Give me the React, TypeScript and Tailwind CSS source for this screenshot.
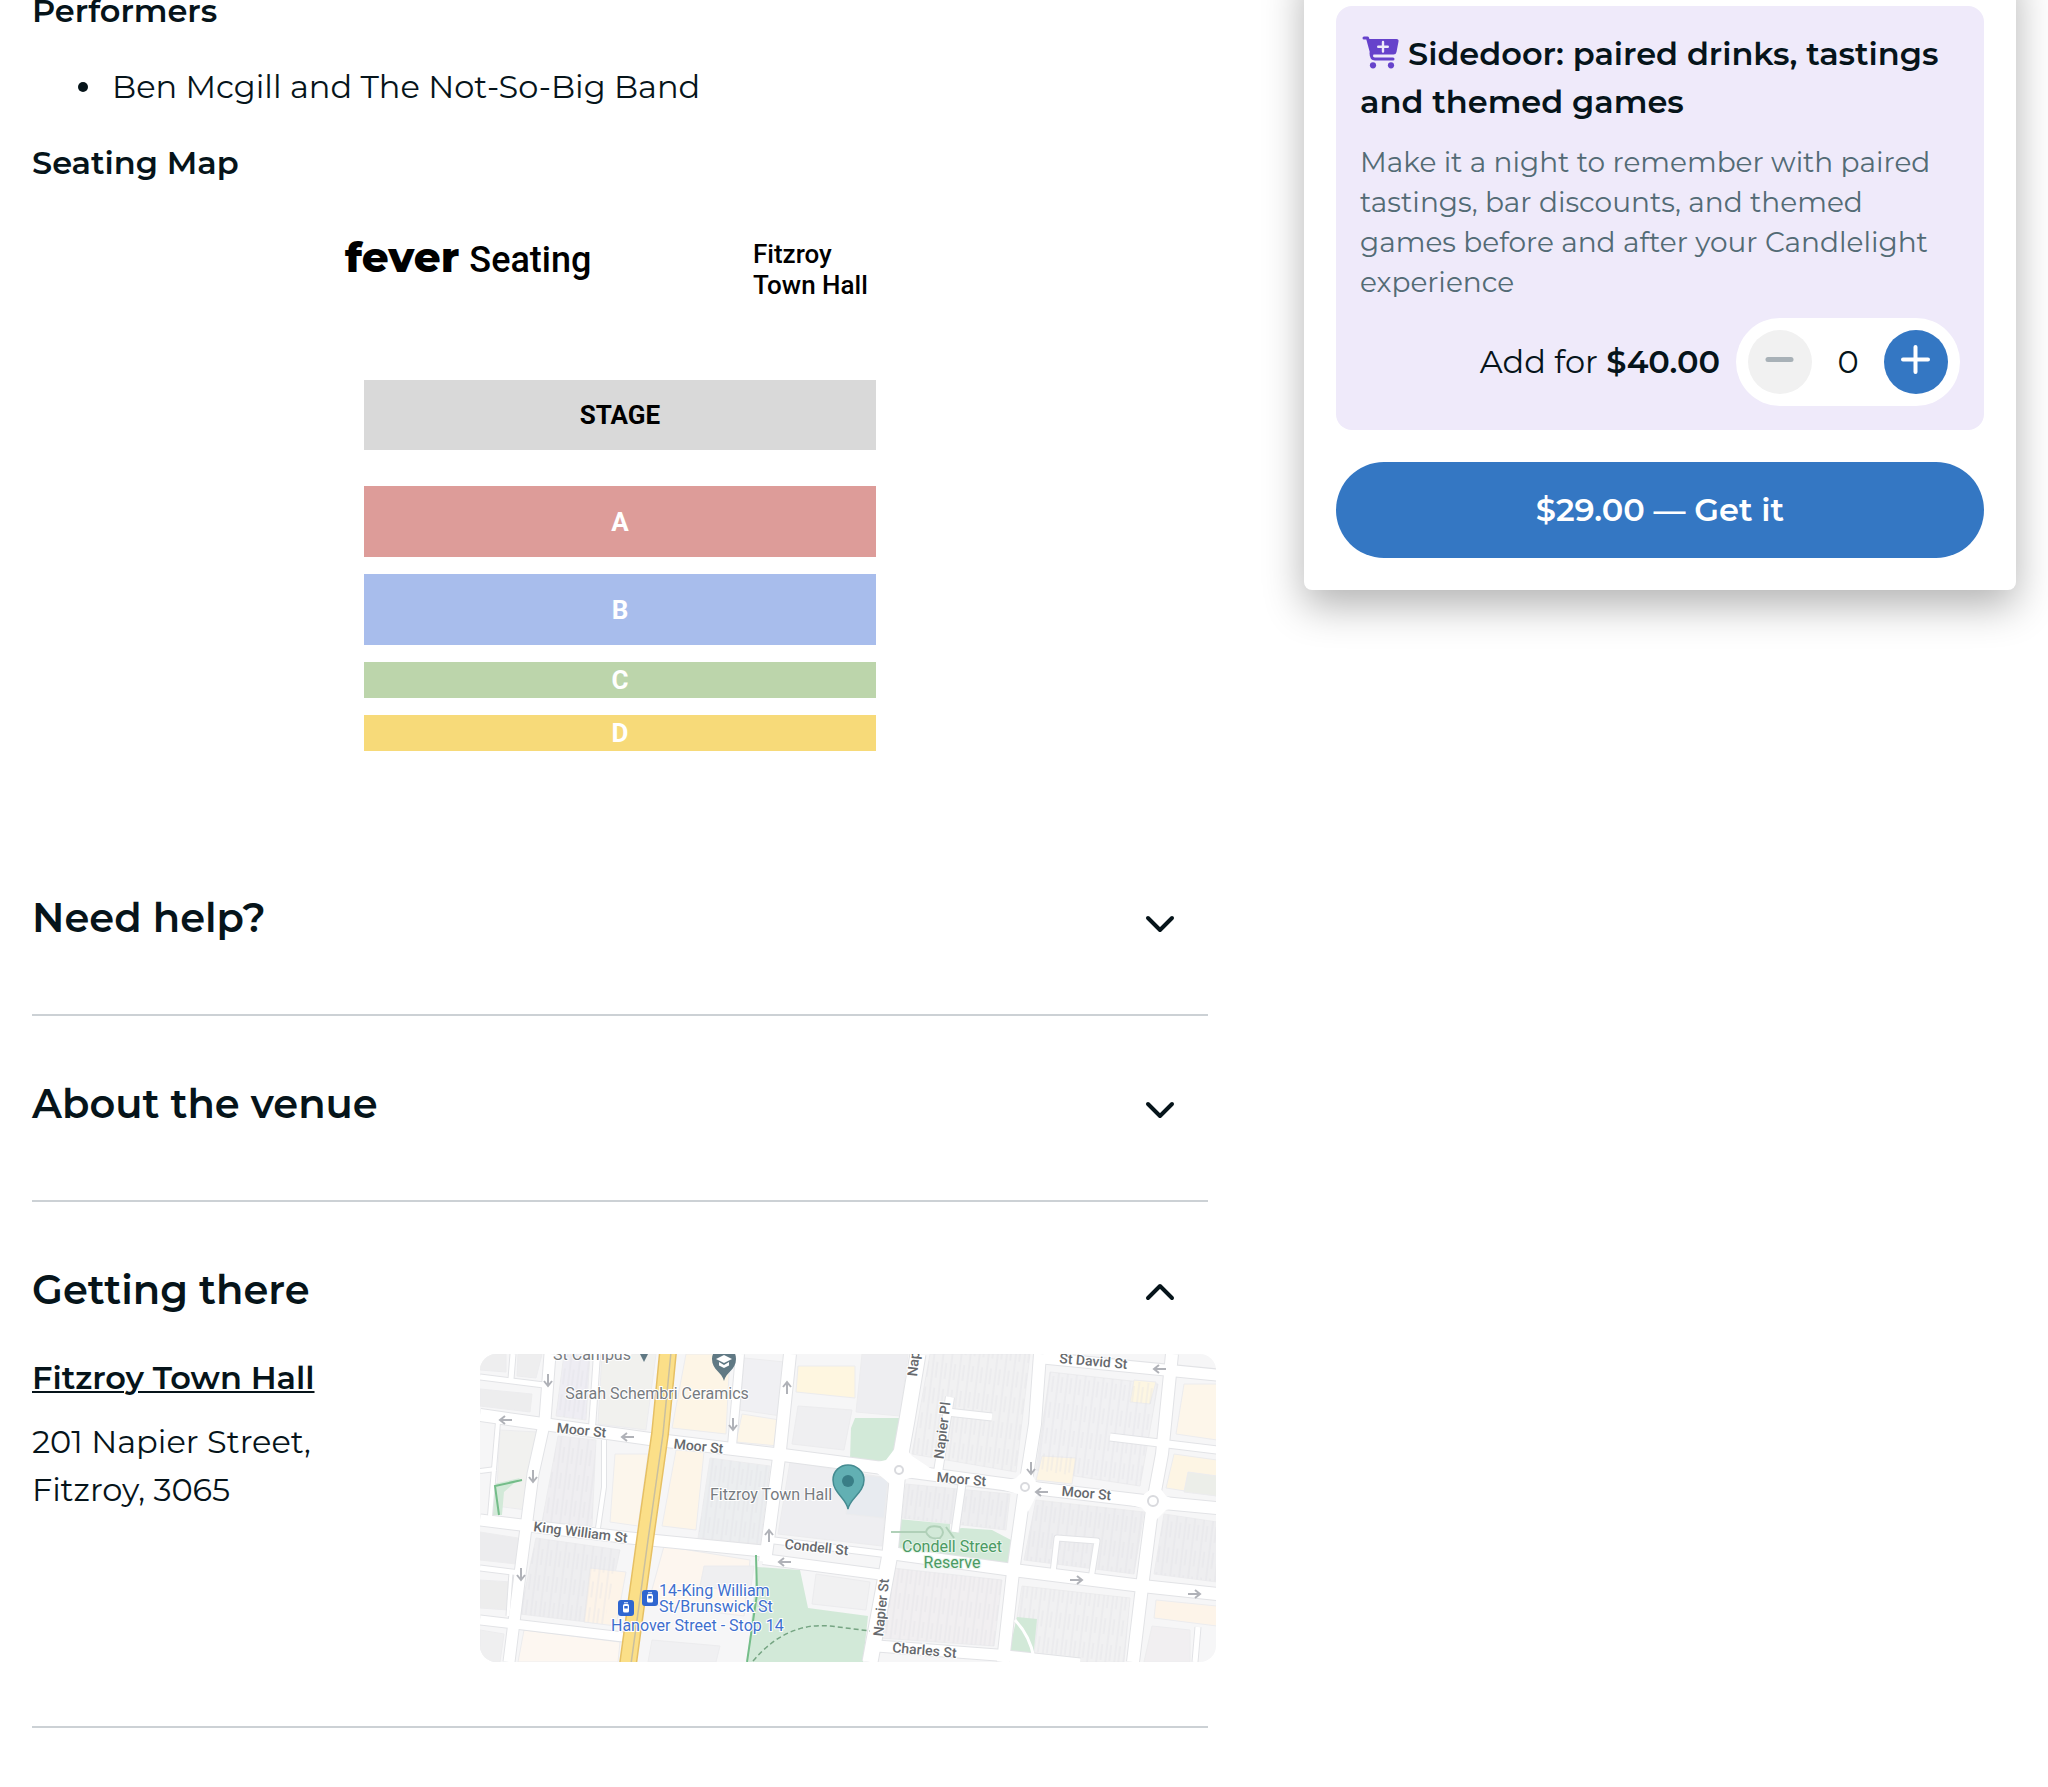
import React, { useState } from "react";

const INK = "text-[#06141a]";

function CartPlusIcon() {
  return (
    <svg viewBox="0 0 38 34" className="mr-2 ml-0.5 inline-block h-[34px] w-[38px] align-[-4px]" aria-hidden="true">
      <path d="M2 3H5.5L10 19.5" fill="none" stroke="#6642cb" strokeWidth="3" strokeLinecap="round" strokeLinejoin="round" />
      <path d="M5.5 4H34.5Q37 4 36.5 6.5L34.5 17Q34 19.5 31.5 19.5H9.5Z" fill="#6642cb" />
      <path d="M9 18Q9 24 13 24H31" fill="none" stroke="#6642cb" strokeWidth="3" strokeLinecap="round" />
      <path d="M21 7V16.5M16.2 11.8H25.8" stroke="#efeafa" strokeWidth="2.4" strokeLinecap="round" />
      <circle cx="11" cy="30.3" r="3.1" fill="#6642cb" />
      <circle cx="29" cy="30.3" r="3.1" fill="#6642cb" />
    </svg>
  );
}

function Chevron({ open }: { open: boolean }) {
  return (
    <svg viewBox="0 0 48 48" className="size-12" fill="none" stroke="#06141a" strokeWidth="4" strokeLinecap="round" strokeLinejoin="round" aria-hidden="true">
      <path d={open ? "M12 32L24 20L36 32" : "M12 24L24 36L36 24"} />
    </svg>
  );
}

function SeatRow({ label, className }: { label: string; className: string }) {
  return (
    <div className={`flex items-center justify-center text-[26px] leading-8 font-bold text-white ${className}`}>
      {label}
    </div>
  );
}

function SeatingChart() {
  return (
    <figure className="mx-auto w-[550px] font-['Roboto',sans-serif] text-black">
      <figcaption className="flex items-start justify-between font-medium">
        <div className="flex items-baseline gap-2.5 leading-9">
          <span className="font-['Montserrat',sans-serif] text-[42px] font-extrabold">fever</span>
          <span className="text-[36px]">Seating</span>
        </div>
        <p className="w-[142px] text-[26px] leading-[31px]">
          Fitzroy
          <br />
          Town Hall
        </p>
      </figcaption>
      <div className="mx-[19px] mt-[79px] flex flex-col">
        <div className="mb-9 flex h-[70px] items-center justify-center bg-[#d9d9d9] text-[26px] font-bold">STAGE</div>
        <div className="flex flex-col gap-[17px]">
          <SeatRow label="A" className="h-[71px] bg-[#dd9c99]" />
          <SeatRow label="B" className="h-[71px] bg-[#a8bdec]" />
          <SeatRow label="C" className="h-9 bg-[#bcd5ab]" />
          <SeatRow label="D" className="h-9 bg-[#f7da79]" />
        </div>
      </div>
    </figure>
  );
}

const roads: [string, number][] = [
  ["M33 0L31 25", 5],
  ["M0 23L64 31", 5],
  ["M70 0L65 66L53 120L40 220L29 308", 11],
  ["M18 68L10 162", 4],
  ["M0 117L16 115", 4],
  ["M117 0L112 74", 6],
  ["M124 86L124 133L118 174", 4],
  ["M0 214L40 219", 5],
  ["M0 266L143 283", 9],
  ["M31 218L28 262", 3],
  ["M0 61L170 85L303 101L418 116L545 133L673 148L737 154", 12],
  ["M0 166L150 184L283 197", 11],
  ["M290 186L413 201", 6],
  ["M283 205L404 221", 10],
  ["M410 199L533 216L662 232L737 240", 12],
  ["M260 0L252 92", 8],
  ["M310 0L300 96L285 208", 12],
  ["M438 0L427 66L418 116L410 200L390 308", 15],
  ["M470 43L458 118", 8],
  ["M467 58L512 63", 7],
  ["M560 0L555 70L545 133L533 218L523 308", 12],
  ["M692 0L682 100L673 148L662 233L653 308", 12],
  ["M563 4L737 21", 11],
  ["M630 83L737 96", 7],
  ["M482 130L475 178", 7],
  ["M573 219L577 184L617 187L611 225", 5],
  ["M397 292L517 301L600 310", 11],
  ["M718 273L715 308", 5],
];

const blocks: [string, string][] = [
  ["M206 0H250L246 80L192 74Z", "#fdf5e6"],
  ["M196 96L224 98L216 176L182 172Z", "#fdf5e8"],
  ["M135 100H168L158 172L130 168Z", "#fcf6ec"],
  ["M262 60L300 66L298 92L256 88Z", "#fdf6e8"],
  ["M264 4L304 8L301 62L260 56Z", "#f0f0f3"],
  ["M318 12H375V44L316 38Z", "#fef6e0"],
  ["M122 0H176L166 76L118 70Z", "#f1f1ee"],
  ["M84 0H110L106 66L76 62Z", "#eeedf3"],
  ["M78 82L116 86L112 172L62 168Z", "#efeef1"],
  ["M230 104L290 112L280 190L218 184Z", "#eceef0"],
  ["M0 35L52 40L50 58L0 52Z", "#ededee"],
  ["M0 0H26V18L0 16Z", "#eeeeef"],
  ["M38 0H62L56 24L37 22Z", "#eeeeef"],
  ["M20 76L58 78L46 156L16 152Z", "#f1f1ef"],
  ["M0 178L38 184L36 210L0 206Z", "#ececee"],
  ["M0 226L32 228L28 256L0 254Z", "#ededed"],
  ["M0 276L24 280L20 308H0Z", "#efeff0"],
  ["M56 184L140 196L124 270L40 260Z", "#eeeef0"],
  ["M110 214L146 218L136 272L104 268Z", "#fdf4e9"],
  ["M184 192L270 206L264 262L168 250Z", "#fdf6ef"],
  ["M224 212H274L270 240L220 232Z", "#efeff1"],
  ["M172 286L240 292L236 308H168Z", "#f0f0f2"],
  ["M44 276L140 288L138 308H38Z", "#fdf7f1"],
  ["M318 52L372 56L364 96L312 90Z", "#efeff1"],
  ["M382 0H428L420 62L376 58Z", "#eeeef1"],
  ["M310 108L408 124L402 192L298 180Z", "#eeeef1"],
  ["M372 120L408 124L404 164L366 160Z", "#e8ebf0"],
  ["M450 0H550L536 118L432 100Z", "#f1f1f2"],
  ["M570 18L678 30L660 132L556 116Z", "#f1f1f3"],
  ["M654 26L676 28L670 50L650 48Z", "#fdf6e2"],
  ["M562 102L596 104L592 130L556 126Z", "#fdf5e4"],
  ["M704 30H737V86L696 80Z", "#fdf6ea"],
  ["M694 100L737 106V142L686 134Z", "#fdf5e4"],
  ["M708 118L737 122V142L704 138Z", "#eceee9"],
  ["M426 130L530 140L526 176L422 164Z", "#eeeef0"],
  ["M556 146L664 158L654 220L544 206Z", "#eeeef0"],
  ["M684 160L737 168V228L674 220Z", "#eeeef0"],
  ["M412 214L522 226L514 292L400 284Z", "#f1eff1"],
  ["M542 232L650 244L644 308H530Z", "#f1f1f2"],
  ["M676 246L737 252V272L674 264Z", "#fdf4e9"],
  ["M672 272L710 276V308H664Z", "#f1eff1"],
  ["M336 220L390 228L386 256L332 250Z", "#f1f1f2"],
];

const parks = [
  "M375 64H422L419 84L408 108L370 105L371 74Z",
  "M418 165L470 170V176L482 174L512 176L531 186L529 213L414 200Z",
  "M277 213L320 216L328 254L388 262L383 308H267Z",
  "M537 263L557 265L553 305L528 301Z",
  "M14 130L40 124L24 138L22 161H11Z",
];

const arrows: [number, number, number][] = [
  [68, 26, 90], [26, 66, 180], [148, 83, 180], [253, 70, 90], [307, 34, -90], [53, 122, 90],
  [41, 220, 90], [289, 182, -90], [305, 208, 180], [551, 114, 90], [562, 138, 180],
  [680, 15, 180], [596, 226, 0], [714, 240, 0],
];

function StreetLabel({ x, y, angle, children }: { x: number; y: number; angle: number; children: string }) {
  return (
    <text x={x} y={y} transform={`rotate(${angle} ${x} ${y})`} textAnchor="middle" fontSize="14" fontWeight="500" fill="#66696d" stroke="#fff" strokeWidth="2" paintOrder="stroke">
      {children}
    </text>
  );
}

function TramStop({ x, y }: { x: number; y: number }) {
  return (
    <g transform={`translate(${x} ${y})`}>
      <rect width="16" height="16" rx="3" fill="#2f66d0" />
      <rect x="5" y="4" width="6" height="8.5" rx="1.5" fill="#fff" />
      <rect x="6.3" y="6" width="3.4" height="2.5" fill="#2f66d0" />
      <path d="M6 2.8H10" stroke="#fff" />
    </g>
  );
}

function StreetMap() {
  return (
    <svg viewBox="0 0 736 308" className="-mr-2 w-[736px] shrink-0 rounded-2xl font-['Roboto',sans-serif]" role="img" aria-label="Map of Fitzroy Town Hall">
      <defs>
        <pattern id="lots" width="9" height="26" patternUnits="userSpaceOnUse" patternTransform="rotate(7)">
          <path d="M1 0V26M5 4V20" stroke="#dfe0e3" strokeWidth="1" opacity="0.6" />
        </pattern>
      </defs>
      <rect width="736" height="308" fill="#f6f6f7" />
      {blocks.map(([d, fill]) => (
        <path key={d} d={d} fill={fill} stroke="#ececee" />
      ))}
      <path d="M78 82L116 86L112 172L62 168ZM84 0H110L106 66L76 62ZM450 0H550L536 118L432 100ZM570 18L678 30L660 132L556 116ZM556 146L664 158L654 220L544 206ZM684 160L737 168V228L674 220ZM412 214L522 226L514 292L400 284ZM542 232L650 244L644 308H530ZM426 130L530 140L526 176L422 164ZM230 104L290 112L280 190L218 184ZM56 184L140 196L124 270L40 260Z" fill="url(#lots)" />
      {parks.map((d) => (
        <path key={d} d={d} fill="#d2e9d8" />
      ))}
      {roads.map(([d, w]) => (
        <path key={d} d={d} fill="none" stroke="#e2e3e6" strokeWidth={w + 2} strokeLinejoin="round" />
      ))}
      {roads.map(([d, w]) => (
        <path key={d} d={d} fill="none" stroke="#fff" strokeWidth={w} strokeLinejoin="round" />
      ))}
      <path d="M420 88L432 102L456 118L430 124L410 130L396 118L380 112L406 106Z" fill="#fff" />
      <path d="M548 112L556 128L578 136L556 142L548 158L538 140L510 132L536 124Z" fill="#fff" />
      <path d="M677 130L686 142L704 150L686 156L674 168L662 154L640 148L662 142Z" fill="#fff" />
      {[[419, 116, 4], [545, 133, 4], [673, 147, 5]].map(([cx, cy, r]) => (
        <circle key={cx} cx={cx} cy={cy} r={r} fill="#fff" stroke="#d9dade" strokeWidth="2" />
      ))}
      <path d="M535 266Q550 282 554 304" fill="none" stroke="#fff" strokeWidth="3" />
      <path d="M188 -2L180 80L165 186L148 310" fill="none" stroke="#e6c064" strokeWidth="18" />
      <path d="M188 -2L180 80L165 186L148 310" fill="none" stroke="#fbdf88" strokeWidth="15" />
      <path d="M191 -2L183 80L168 186L151 310" fill="none" stroke="#c9bf9f" strokeWidth="1.5" />
      <path d="M276 201L277 240L267 308M42 126L15 132L19 161" fill="none" stroke="#74bd89" strokeWidth="2" />
      <path d="M273 307Q306 268 350 272L390 277" fill="none" stroke="#75a482" strokeWidth="1.5" strokeDasharray="5 3" />
      <path d="M411 178H446M446 178Q448 170 460 173Q466 178 460 184Q449 186 446 178M466 173L474 184" fill="none" stroke="#b0d0b8" strokeWidth="2" />
      {arrows.map(([x, y, a]) => (
        <path key={`${x}-${y}`} d="M-6 0H6M1 -4L6 0L1 4" transform={`translate(${x} ${y}) rotate(${a})`} fill="none" stroke="#b0b2b8" strokeWidth="2" />
      ))}

      <StreetLabel x={101} y={81} angle={6}>Moor St</StreetLabel>
      <StreetLabel x={218} y={97} angle={6}>Moor St</StreetLabel>
      <StreetLabel x={481} y={130} angle={5}>Moor St</StreetLabel>
      <StreetLabel x={606} y={144} angle={5}>Moor St</StreetLabel>
      <StreetLabel x={100} y={183} angle={7}>King William St</StreetLabel>
      <StreetLabel x={336} y={198} angle={6}>Condell St</StreetLabel>
      <StreetLabel x={613} y={12} angle={5}>St David St</StreetLabel>
      <StreetLabel x={444} y={301} angle={5}>Charles St</StreetLabel>
      <StreetLabel x={467} y={77} angle={-83}>Napier Pl</StreetLabel>
      <StreetLabel x={440} y={-6} angle={-84}>Napier St</StreetLabel>
      <StreetLabel x={406} y={254} angle={-84}>Napier St</StreetLabel>

      <g fill="#777b80" fontSize="16" stroke="#fff" strokeWidth="2" paintOrder="stroke" textAnchor="middle">
        <text x="112" y="6">St Campus</text>
        <text x="177" y="45">Sarah Schembri Ceramics</text>
        <text x="291" y="146">Fitzroy Town Hall</text>
      </g>
      <g fill="#4b9a63" fontSize="16" stroke="#e6f4ea" strokeWidth="2" paintOrder="stroke" textAnchor="middle">
        <text x="472" y="198">Condell Street</text>
        <text x="472" y="214">Reserve</text>
      </g>
      <g fill="#3e6fce" fontSize="16" stroke="#fff" strokeWidth="2" paintOrder="stroke">
        <text x="179" y="242">14-King William</text>
        <text x="179" y="258">St/Brunswick St</text>
        <text x="131" y="277">Hanover Street - Stop 14</text>
      </g>
      <TramStop x={162} y={236} />
      <TramStop x={138} y={246} />

      <path d="M160 0H168L164 8Z" fill="#607984" />
      <path d="M244 27C242 18 232 16 232 5C232 -2 237 -6 244 -6C251 -6 256 -2 256 5C256 16 246 18 244 27Z" fill="#607984" />
      <path d="M244 1L252 5L244 9L236 5ZM239 8L244 11L249 8V11.500L244 14L239 11.500Z" fill="#fff" />
      <path d="M368 155C366 144 353 139 353 126C353 117 360 111 368 111C376 111 384 117 384 126C384 139 370 144 368 155Z" fill="#62b0b3" stroke="#458b91" strokeWidth="1.500" />
      <circle cx="368" cy="127" r="6" fill="#397e86" />
    </svg>
  );
}

function Section({ title, defaultOpen = false, children }: { title: string; defaultOpen?: boolean; children: React.ReactNode }) {
  const [open, setOpen] = useState(defaultOpen);
  return (
    <section className="border-b-2 border-[#ccd1d5] pt-14 pb-16">
      <h2>
        <button type="button" aria-expanded={open} onClick={() => setOpen(!open)} className="flex w-full items-center justify-between pr-6 text-left text-[40px] leading-[64px] font-semibold">
          {title}
          <Chevron open={open} />
        </button>
      </h2>
      {open && <div className="mt-8">{children}</div>}
    </section>
  );
}

function AddOnCard() {
  const [count, setCount] = useState(0);
  return (
    <div className="rounded-2xl bg-[#efeafa] p-6">
      <h3 className="text-[32px] leading-[48px] font-semibold">
        <CartPlusIcon />
        Sidedoor: paired drinks, tastings and themed games
      </h3>
      <p className="mt-4 text-[28px] leading-10 text-[#536b75]">
        Make it a night to remember with paired tastings, bar discounts, and themed
        <br />
        games before and after your Candlelight experience
      </p>
      <div className="mt-4 flex items-center justify-end gap-4">
        <p className="text-[32px] leading-[48px]">
          Add for <strong className="font-semibold">$40.00</strong>
        </p>
        <div className="flex w-56 items-center justify-between rounded-full bg-white p-3">
          <button type="button" aria-label="Remove one" onClick={() => setCount(Math.max(0, count - 1))} className="size-16 rounded-full bg-[#f1f1f1]">
            <svg viewBox="0 0 64 64" className="size-16" stroke="#a8b1b7" strokeWidth="5" strokeLinecap="round" aria-hidden="true">
              <path d="M20 29.500H43" />
            </svg>
          </button>
          <output className="text-[32px] leading-[48px]">{count}</output>
          <button type="button" aria-label="Add one" onClick={() => setCount(count + 1)} className="size-16 rounded-full bg-[#3477c3]">
            <svg viewBox="0 0 64 64" className="size-16" stroke="#fff" strokeWidth="4" strokeLinecap="round" aria-hidden="true">
              <path d="M19 29.500H44M31.500 17V42" />
            </svg>
          </button>
        </div>
      </div>
    </div>
  );
}

export default function App() {
  return (
    <div className={`flex min-h-screen items-start gap-24 overflow-hidden bg-white px-8 font-['Montserrat','Inter',sans-serif] ${INK}`}>
      <main className="-mt-[13px] min-w-0 flex-1">
        <h3 className="text-[32px] leading-[48px] font-semibold">Performers</h3>
        <ul className="my-7 pl-[46px] text-[32px] leading-[48px]">
          <li className="flex items-center gap-6 before:size-2.5 before:rounded-full before:bg-[#06141a]">
            Ben Mcgill and The Not-So-Big Band
          </li>
        </ul>
        <h3 className="mb-[52px] text-[32px] leading-[48px] font-semibold">Seating Map</h3>
        <SeatingChart />
        <div className="mt-[79px]">
          <Section title="Need help?">
            <p className="text-[32px] leading-[48px]">Contact our support team.</p>
          </Section>
          <Section title="About the venue">
            <p className="text-[32px] leading-[48px]">Fitzroy Town Hall</p>
          </Section>
          <Section title="Getting there" defaultOpen>
            <div className="flex items-start justify-between">
              <address className="text-[32px] leading-[48px] not-italic">
                <a href="#venue" className="mb-4 block font-semibold underline decoration-2 underline-offset-2">
                  Fitzroy Town Hall
                </a>
                201 Napier Street,
                <br />
                Fitzroy, 3065
              </address>
              <StreetMap />
            </div>
          </Section>
        </div>
      </main>
      <aside className="-mt-10 w-[712px] shrink-0 rounded-lg bg-white px-8 pt-[46px] pb-8 shadow-[0_16px_40px_rgba(0,0,0,0.3)]">
        <AddOnCard />
        <button type="button" className="mt-8 h-24 w-full rounded-full bg-[#3477c3] text-[32px] font-semibold text-white">
          $29.00 — Get it
        </button>
      </aside>
    </div>
  );
}
